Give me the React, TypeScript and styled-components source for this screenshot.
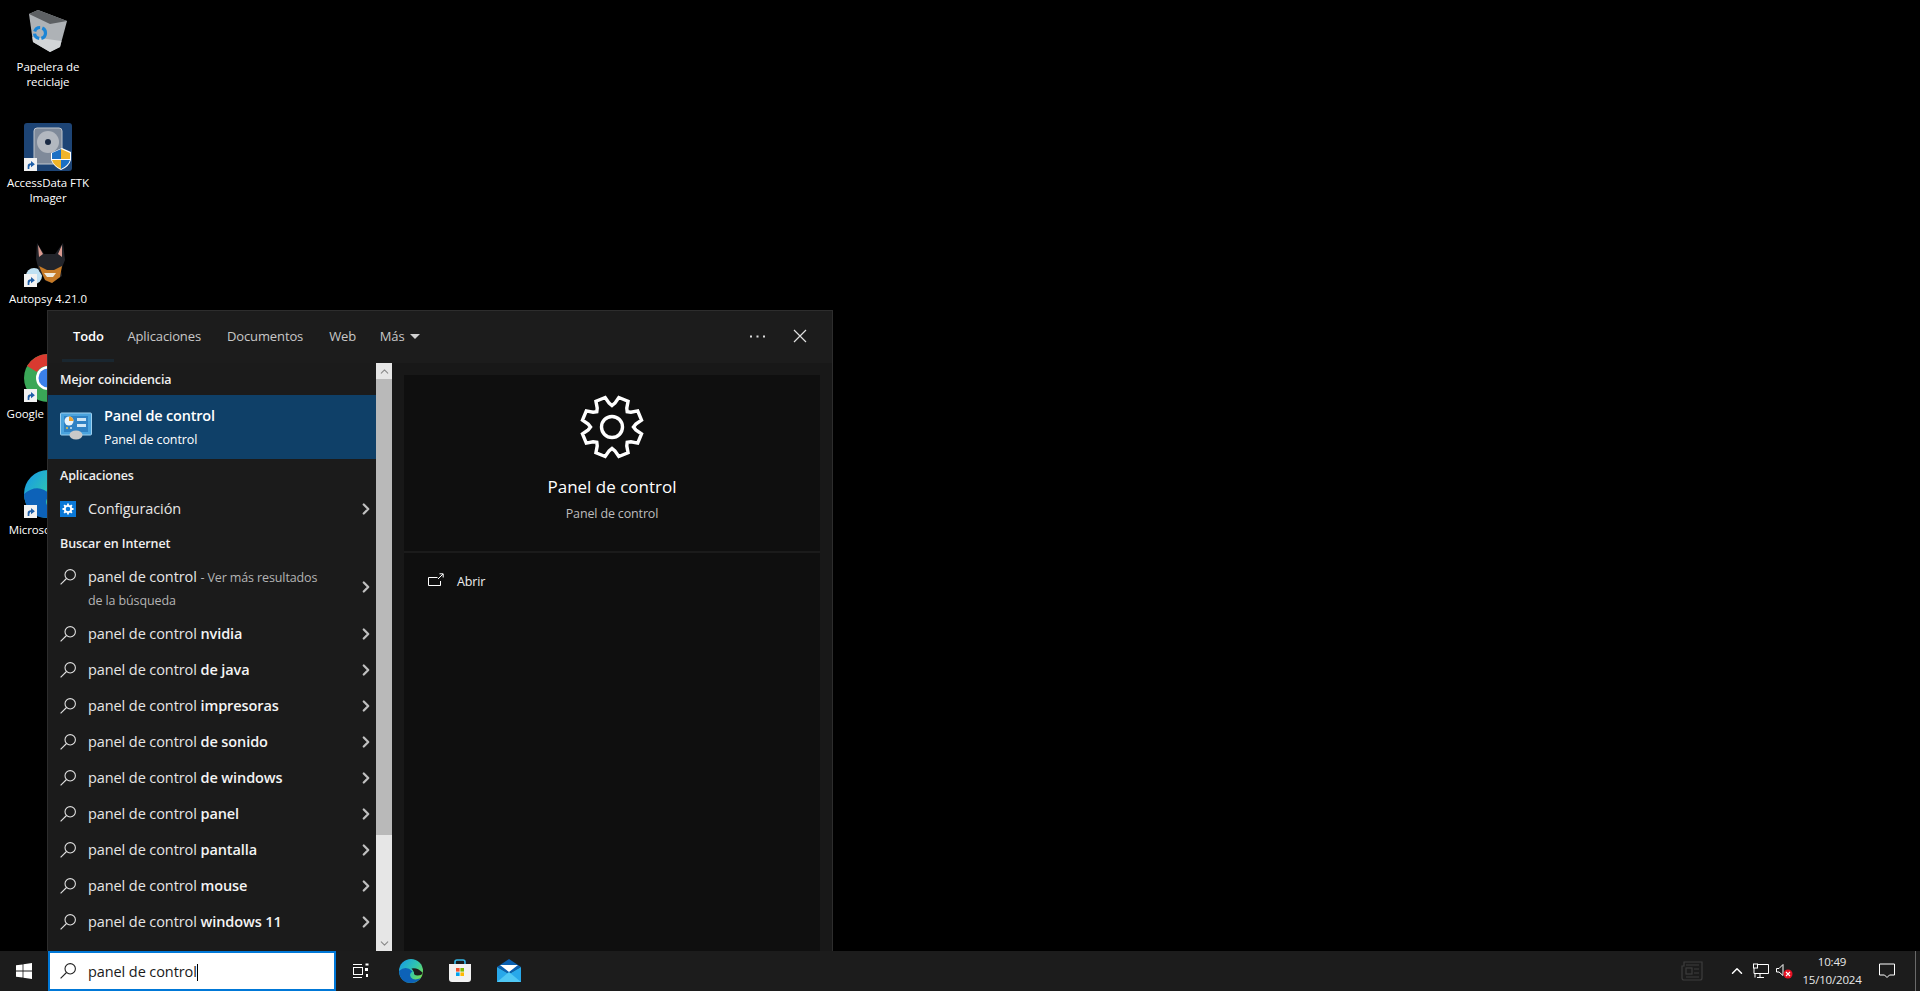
import React from 'react';
import styled, { createGlobalStyle } from 'styled-components';
import { FiChevronRight, FiChevronUp, FiChevronDown } from 'react-icons/fi';

const GlobalStyle = createGlobalStyle`
  html, body {
    margin: 0;
    padding: 0;
    height: 991px;
    background: #000;
    overflow: hidden;
    font-family: "Open Sans", "Noto Sans", sans-serif;
  }
`;

const Screen = styled.div`
  width: 1920px;
  height: 991px;
  display: flex;
  flex-direction: column;
  background: #000;
  position: relative;
  overflow: hidden;
`;

const Desktop = styled.div`
  flex: 1;
  min-height: 0;
  position: relative;
`;

const DesktopIconBox = styled.div<{ $y: number }>`
  position: absolute;
  left: 0;
  top: ${(p) => p.$y}px;
  width: 96px;
  display: flex;
  flex-direction: column;
  align-items: center;
  color: #fff;
  font-size: 11.5px;
  line-height: 15px;
  text-align: center;
  letter-spacing: -0.08px;
`;

const DesktopIconArt = styled.div`
  width: 48px;
  height: 48px;
  margin-bottom: 4px;
  position: relative;
`;

const ShortcutBadge = styled.span`
  position: absolute;
  left: 0;
  bottom: 0;
  width: 13px;
  height: 13px;
  background: #f2f2f2;
  display: flex;
  align-items: center;
  justify-content: center;
`;

const Panel = styled.div`
  position: absolute;
  left: 47px;
  top: 310px;
  width: 786px;
  height: 641px;
  background: #1b1b1b;
  border: 1px solid #2d2d2d;
  border-bottom: 0;
  box-sizing: border-box;
  display: flex;
  flex-direction: column;
  color: #fff;
`;

const TabBar = styled.div`
  height: 52px;
  flex: none;
  box-sizing: border-box;
  display: flex;
  align-items: center;
  padding: 0 25px 2px 12px;
  background: #1c1c1c;
  position: relative;
`;

const Tab = styled.div<{ $active?: boolean }>`
  padding: 0 13px;
  margin-right: ${(p) => (p.$active ? '-2.4px' : '0')};
  font-size: 13px;
  letter-spacing: -0.12px;
  color: ${(p) => (p.$active ? '#fff' : '#c8c8c8')};
  font-weight: ${(p) => (p.$active ? 600 : 400)};
  display: flex;
  align-items: center;
  gap: 6px;
`;

const MoreTab = styled(Tab)`
  margin-left: -2.4px;
`;

const TabCaret = styled.span`
  width: 0;
  height: 0;
  border-left: 5px solid transparent;
  border-right: 5px solid transparent;
  border-top: 5px solid #d0d0d0;
`;

const TabActions = styled.div`
  margin-left: auto;
  display: flex;
  align-items: center;
  gap: 28px;
`;

const ActiveLine = styled.span`
  position: absolute;
  left: 14px;
  bottom: 1px;
  width: 52px;
  height: 3px;
  background: #1a2730;
`;

const PanelBody = styled.div`
  flex: 1;
  min-height: 0;
  display: flex;
`;

const ResultsColumn = styled.div`
  width: 328px;
  flex: none;
  overflow: hidden;
  display: flex;
  flex-direction: column;
`;

const GroupTitle = styled.div`
  height: 32px;
  flex: none;
  display: flex;
  align-items: center;
  padding-left: 12px;
  font-size: 12.5px;
  font-weight: 600;
  letter-spacing: -0.1px;
  color: #f0f0f0;
`;

const BestMatch = styled.div`
  height: 64px;
  flex: none;
  background: #0f4068;
  display: flex;
  align-items: center;
  padding-left: 12px;
  gap: 12px;
`;

const BestText = styled.div`
  display: flex;
  flex-direction: column;
  gap: 7px;
`;

const BestTitle = styled.div`
  font-size: 14.5px;
  line-height: 18px;
  font-weight: 600;
  letter-spacing: -0.2px;
`;

const BestSubtitle = styled.div`
  font-size: 12.5px;
  line-height: 16px;
  letter-spacing: -0.1px;
`;

const Row = styled.div<{ $tall?: boolean }>`
  height: ${(p) => (p.$tall ? 57 : 36)}px;
  padding: ${(p) => (p.$tall ? 3 : 0)}px 1px 0 12px;
  box-sizing: border-box;
  flex: none;
  display: flex;
  align-items: center;
  font-size: 14.5px;
  letter-spacing: -0.09px;
  color: #e6e6e6;
`;

const RowIcon = styled.span<{ $top?: boolean }>`
  width: 16px;
  height: 16px;
  flex: none;
  margin-right: 12px;
  align-self: ${(p) => (p.$top ? 'flex-start' : 'center')};
  margin-top: ${(p) => (p.$top ? '7px' : '0')};
  display: flex;
`;

const RowLabel = styled.div`
  flex: 1;
  line-height: 22px;
  b {
    font-weight: 600;
    color: #f4f4f4;
  }
`;

const Muted = styled.span`
  font-size: 12.5px;
  color: #b4b4b4;
  letter-spacing: -0.12px;
`;

const Chevron = styled(FiChevronRight)`
  width: 18px;
  height: 18px;
  flex: none;
  color: #c0c0c0;
  stroke-width: 3;
`;

const TallChevron = styled(Chevron)`
  margin-bottom: 4px;
`;

const ScrollBar = styled.div`
  width: 16px;
  flex: none;
  background: #e6e6e6;
  display: flex;
  flex-direction: column;
`;

const ScrollButton = styled.div`
  height: 16px;
  flex: none;
  display: flex;
  align-items: center;
  justify-content: center;
  color: #8a8a8a;
  font-size: 13px;
`;

const ScrollThumb = styled.div`
  height: 456px;
  flex: none;
  background: #b9b9b9;
`;

const ScrollSpacer = styled.div`
  flex: 1;
`;

const PreviewColumn = styled.div`
  flex: 1;
  padding: 12px 12px 0;
  background: #181818;
  display: flex;
`;

const PreviewCard = styled.div`
  flex: 1;
  background: #0f0f0f;
  display: flex;
  flex-direction: column;
`;

const PreviewHead = styled.div`
  height: 178px;
  flex: none;
  box-sizing: border-box;
  padding-top: 20px;
  border-bottom: 2px solid #1b1b1b;
  display: flex;
  flex-direction: column;
  align-items: center;
`;

const PreviewTitle = styled.div`
  margin-top: 16px;
  font-size: 17px;
  line-height: 24px;
  letter-spacing: 0;
`;

const PreviewSubtitle = styled.div`
  margin-top: 6px;
  font-size: 12.5px;
  line-height: 18px;
  letter-spacing: -0.15px;
  color: #bdbdbd;
`;

const ActionRow = styled.div`
  display: flex;
  align-items: center;
  gap: 13px;
  padding: 20px 0 0 24px;
  font-size: 12.5px;
  letter-spacing: -0.15px;
  color: #f0f0f0;
  svg {
    margin-bottom: 3px;
  }
`;

const TaskBar = styled.div`
  position: absolute;
  left: 0;
  right: 0;
  bottom: 0;
  height: 40px;
  background: #1c1c1c;
  display: flex;
  align-items: stretch;
  color: #fff;
`;

const StartButton = styled.div`
  width: 48px;
  flex: none;
  display: flex;
  align-items: center;
  justify-content: center;
`;

const SearchBox = styled.div`
  width: 288px;
  flex: none;
  box-sizing: border-box;
  background: #fff;
  border: 2px solid #0078d7;
  display: flex;
  align-items: center;
  padding-left: 10px;
  gap: 12px;
  color: #1a1a1a;
  font-size: 14.5px;
  letter-spacing: -0.09px;
`;

const Caret = styled.span`
  display: inline-block;
  width: 1px;
  height: 17px;
  background: #000;
  vertical-align: -4px;
`;

const TaskButton = styled.div`
  width: 49px;
  flex: none;
  display: flex;
  align-items: center;
  justify-content: center;
`;

const TaskApps = styled.div`
  display: flex;
  margin-left: 1px;
`;

const Tray = styled.div`
  margin-left: auto;
  display: flex;
  align-items: center;
`;

const TrayIcon = styled.div<{ $w: number }>`
  width: ${(p) => p.$w}px;
  display: flex;
  align-items: center;
  justify-content: center;
`;

const Clock = styled.div`
  width: 70px;
  text-align: center;
  font-size: 11.5px;
  line-height: 18px;
  letter-spacing: -0.2px;
  color: #e8e8e8;
`;

const ShowDesktop = styled.div`
  width: 5px;
  align-self: stretch;
  margin-left: 8px;
  border-left: 1px solid #6a6a6a;
  box-sizing: border-box;
`;

// gear outline: 8 flat teeth, a notch straight up
const gearPath = (() => {
  const c = 32;
  const pts: string[] = [];
  for (let i = 0; i < 8; i++) {
    const a = (i * 45 - 90) * (Math.PI / 180);
    const step = Math.PI / 180;
    const at = (r: number, deg: number) =>
      `${(c + r * Math.cos(a + deg * step)).toFixed(2)} ${(c + r * Math.sin(a + deg * step)).toFixed(2)}`;
    pts.push(at(21.5, 0), at(24, 7), at(30.3, 13), at(30.3, 32), at(24, 38));
  }
  return `M${pts.join(' L')} Z`;
})();

const Arrow = () => (
  <svg width="10" height="10" viewBox="0 0 9 9">
    <path d="M1.5 8 V5.5 Q1.5 3 4.5 3 V1 L8 3.8 L4.5 6.5 V4.6 Q3 4.6 3 8 Z" fill="#1f5fa8" />
  </svg>
);

const SearchGlyph = ({ color }: { color: string }) => (
  <svg width="16" height="16" viewBox="0 0 16 16" fill="none" stroke={color} strokeWidth="1.1">
    <circle cx="10.2" cy="5.8" r="5.2" />
    <path d="M6.5 9.5 L0.6 15.4" />
  </svg>
);

const RecycleBin = () => (
  <svg width="48" height="48" viewBox="0 0 48 48">
    <path d="M5 7 L14 3 L43 14 L36 40 L26 45 L9 35 Z" fill="#aeb2b6" />
    <path d="M5 7 L14 3 L43 14 L26 17 Z" fill="#5d6063" />
    <path d="M8.4 30 L37.4 34 L36 40 L26 45 L9 35 Z" fill="#d2d5d7" />
    <circle cx="16" cy="26" r="5.5" fill="none" stroke="#1b85d6" strokeWidth="3.2" strokeDasharray="7 2.2" />
  </svg>
);

const FtkIcon = () => (
  <svg width="48" height="48" viewBox="0 0 48 48">
    <rect width="48" height="48" rx="3" fill="#1d4475" />
    <rect x="10" y="5" width="28" height="36" rx="3" fill="#7f8a9a" stroke="#c0c6ce" />
    <circle cx="24" cy="19" r="11" fill="#b3b8c0" />
    <circle cx="24" cy="19" r="3" fill="#1a2a44" />
    <path d="M27 30 L38 25 L47 29 V37 Q45 44 37 47 Q30 44 27 37 Z" fill="#fff" />
    <path d="M37 26 V36 H28 V30 Z" fill="#1b6fc4" />
    <path d="M37 26 L46 30 V36 H37 Z" fill="#f0b429" />
    <path d="M28 37 H37 V46 Q30 43 28 37 Z" fill="#f0b429" />
    <path d="M37 37 H46 Q44 43 37 46 Z" fill="#1b6fc4" />
  </svg>
);

const AutopsyIcon = () => (
  <svg width="48" height="48" viewBox="0 0 48 48">
    <circle cx="10" cy="37" r="8" fill="#bfe0f2" />
    <path d="M13 4 L20 15 H31 L39 4 L41 21 L37 31 L38 37 L28 44 L22 42 L15 32 L12 20 Z" fill="#22242a" />
    <path d="M14 6 L19 15 L15 18 Z M38 6 L34 15 L38 18 Z" fill="#d99a90" />
    <path d="M15 27 L23 31 L30 31 L38 27 L36 38 L28 44 L21 41 Z" fill="#c67a26" />
    <path d="M20 34 L32 34 L29 38 L23 38 Z" fill="#efe9dc" />
  </svg>
);

const ChromeIcon = () => (
  <svg width="48" height="48" viewBox="0 0 48 48">
    <circle cx="24" cy="24" r="24" fill="#3aa757" />
    <path d="M24 0 A24 24 0 0 1 45 12 H24 A12 12 0 0 0 13 18 L3 12 A24 24 0 0 1 24 0 Z" fill="#d93a30" />
    <path d="M45 12 A24 24 0 0 1 24 48 L35 28 A12 12 0 0 0 34 12 Z" fill="#f5c518" />
    <circle cx="24" cy="24" r="12" fill="#fff" />
    <circle cx="24" cy="24" r="9.5" fill="#3a80ea" />
  </svg>
);

const EdgeIcon = ({ size }: { size: number }) => (
  <svg width={size} height={size} viewBox="0 0 48 48">
    <defs>
      <linearGradient id={`edge${size}`} x1="0.1" y1="0.1" x2="0.95" y2="0.7">
        <stop offset="0" stopColor="#1a9fe0" />
        <stop offset="0.55" stopColor="#2fc5b0" />
        <stop offset="1" stopColor="#6fdc5a" />
      </linearGradient>
    </defs>
    <circle cx="24" cy="24" r="24" fill={`url(#edge${size})`} />
    <path d="M0 24 Q2 48 24 48 Q36 48 44 38 Q30 44 24 37 Q19 30 27 25 Q14 12 0 24 Z" fill="#0d62b8" />
    <path d="M25 19 Q36 16 47 27 Q47 33 37 33 Q29 33 30 27 Q28 22 25 19 Z" fill="#1c1c1c" />
  </svg>
);

const ControlPanelIcon = () => (
  <svg width="32" height="32" viewBox="0 0 32 32">
    <rect x="0.5" y="2" width="31" height="22" rx="1" fill="#4aa3dd" stroke="#9dd0ef" />
    <path d="M4 5 H28 V21 H4 Z" fill="#2f82c4" />
    <circle cx="9" cy="10" r="4.5" fill="#e9f3fa" />
    <path d="M9 10 V5.5 A4.5 4.5 0 0 1 13.5 10 Z" fill="#f0a32e" />
    <rect x="17" y="7" width="9" height="3" fill="#cfe6f5" />
    <rect x="17" y="13" width="9" height="3" fill="#cfe6f5" />
    <circle cx="7" cy="17" r="1" fill="#f0c040" />
    <circle cx="11" cy="17" r="1" fill="#cfe6f5" />
    <ellipse cx="16" cy="24" rx="6.5" ry="4.5" fill="#c9c9c9" />
  </svg>
);

const SettingsTile = () => (
  <svg width="16" height="16" viewBox="0 0 16 16">
    <rect width="16" height="16" fill="#0a78d7" />
    <circle cx="8" cy="8" r="3.2" fill="none" stroke="#fff" strokeWidth="1.8" />
    <path d="M8 2.5 V4.5 M8 11.5 V13.5 M2.5 8 H4.5 M11.5 8 H13.5 M4.1 4.1 L5.5 5.5 M10.5 10.5 L11.9 11.9 M4.1 11.9 L5.5 10.5 M10.5 5.5 L11.9 4.1" stroke="#fff" strokeWidth="1.8" />
  </svg>
);

const BigGear = () => (
  <svg width="64" height="64" viewBox="0 0 64 64" fill="none" stroke="#fff" strokeWidth="3.4" strokeLinejoin="miter">
    <circle cx="32" cy="32" r="10.5" />
    <path d={gearPath} />
  </svg>
);

const OpenGlyph = () => (
  <svg width="16" height="14" viewBox="0 0 16 14" fill="none" stroke="#fff" strokeWidth="1">
    <path d="M9.5 4.5 H0.5 V12.5 H12.5 V8" />
    <path d="M10 6 L15 1 M11.5 0.8 H15.2 V4.5" />
  </svg>
);

const Dots = () => (
  <svg width="15" height="3" viewBox="0 0 15 3" fill="#ddd">
    <rect x="0" y="0.5" width="2" height="2" />
    <rect x="6.5" y="0.5" width="2" height="2" />
    <rect x="13" y="0.5" width="2" height="2" />
  </svg>
);

const WindowsLogo = () => (
  <svg width="16" height="16" viewBox="0 0 16 16" fill="#fff">
    <path d="M0 2.3 L6.6 1.4 V7.6 H0 Z M7.4 1.3 L16 0 V7.6 H7.4 Z M0 8.4 H6.6 V14.6 L0 13.7 Z M7.4 8.4 H16 V16 L7.4 14.7 Z" />
  </svg>
);

const TaskView = () => (
  <svg width="16" height="16" viewBox="0 0 16 16" fill="none" stroke="#fff" strokeWidth="1">
    <path d="M0 1.5 H9 M0 14.5 H9" />
    <rect x="0.5" y="4.5" width="9" height="7" />
    <rect x="13" y="1" width="2" height="1" fill="#fff" />
    <rect x="12" y="5" width="3" height="3" fill="#fff" stroke="none" />
    <rect x="13" y="11" width="2" height="3" fill="#fff" stroke="none" />
  </svg>
);

const StoreIcon = () => (
  <svg width="24" height="24" viewBox="0 0 24 24">
    <path d="M7 6 V3 Q7 1 9 1 H15 Q17 1 17 3 V6" fill="none" stroke="#35b8e8" strokeWidth="1.6" />
    <path d="M1 5 H23 V20 Q23 23 20 23 H4 Q1 23 1 20 Z" fill="#f2f2f2" />
    <rect x="8" y="9" width="3.6" height="3.6" fill="#f0502e" />
    <rect x="12.4" y="9" width="3.6" height="3.6" fill="#7fba00" />
    <rect x="8" y="13.4" width="3.6" height="3.6" fill="#00a4ef" />
    <rect x="12.4" y="13.4" width="3.6" height="3.6" fill="#ffb900" />
  </svg>
);

const MailIcon = () => (
  <svg width="24" height="24" viewBox="0 0 24 24">
    <path d="M0 8 L12 0 L24 8 L12 15 Z" fill="#0a5fb0" />
    <path d="M0 8 L12 15 L24 8 V23 H0 Z" fill="#28a8ea" />
    <path d="M0 23 L12 13 L24 23 Z" fill="#50c8f4" />
    <path d="M3 6 H21 L12 13 Z" fill="#fff" />
  </svg>
);

const NewsIcon = () => (
  <svg width="24" height="20" viewBox="0 0 24 20" fill="none" stroke="#3c3c3c" strokeWidth="1.2">
    <path d="M3 1 H21 V17 Q21 19 19 19 H3 Q1 19 1 17 V5 H3 Z" />
    <rect x="5" y="7" width="6" height="6" />
    <path d="M5 4 H18 M13 8 H18 M13 12 H18 M5 16 H18" />
  </svg>
);

const NetworkIcon = () => (
  <svg width="16" height="16" viewBox="0 0 16 16" fill="none" stroke="#fff" strokeWidth="1">
    <path d="M4 1.5 H15.5 V10.5 H1 V5" />
    <rect x="0.5" y="1" width="4" height="4" fill="#1c1c1c" />
    <path d="M2 10.5 V14.5 M7 10.5 V14.5 M4 14.5 H11" />
  </svg>
);

const VolumeIcon = () => (
  <svg width="18" height="16" viewBox="0 0 18 16">
    <path d="M0.5 5.5 H3 L7 1.5 V12.5 L3 9 H0.5 Z" fill="none" stroke="#fff" strokeWidth="1" />
    <circle cx="12" cy="11" r="4.5" fill="#e81123" />
    <path d="M10 9 L14 13 M14 9 L10 13" stroke="#fff" strokeWidth="1.1" />
  </svg>
);

const CommentIcon = () => (
  <svg width="16" height="16" viewBox="0 0 16 16" fill="none" stroke="#fff" strokeWidth="1">
    <path d="M0.5 1 H15.5 V12 H10.5 L8 14.5 L5.5 12 H0.5 Z" />
  </svg>
);

const Close = () => (
  <svg width="14" height="14" viewBox="0 0 14 14" stroke="#e0e0e0" strokeWidth="1.2">
    <path d="M1 1 L13 13 M13 1 L1 13" />
  </svg>
);

const suggestions = [
  'nvidia',
  'de java',
  'impresoras',
  'de sonido',
  'de windows',
  'panel',
  'pantalla',
  'mouse',
  'windows 11',
];

const tabs = ['Aplicaciones', 'Documentos', 'Web'];

export default function App() {
  return (
    <Screen>
      <GlobalStyle />
      <Desktop>
        <DesktopIconBox $y={7}>
          <DesktopIconArt>
            <RecycleBin />
          </DesktopIconArt>
          Papelera de
          <br />
          reciclaje
        </DesktopIconBox>
        <DesktopIconBox $y={123}>
          <DesktopIconArt>
            <FtkIcon />
            <ShortcutBadge>
              <Arrow />
            </ShortcutBadge>
          </DesktopIconArt>
          AccessData FTK
          <br />
          Imager
        </DesktopIconBox>
        <DesktopIconBox $y={239}>
          <DesktopIconArt>
            <AutopsyIcon />
            <ShortcutBadge>
              <Arrow />
            </ShortcutBadge>
          </DesktopIconArt>
          Autopsy 4.21.0
        </DesktopIconBox>
        <DesktopIconBox $y={354}>
          <DesktopIconArt>
            <ChromeIcon />
            <ShortcutBadge>
              <Arrow />
            </ShortcutBadge>
          </DesktopIconArt>
          Google Chrome
        </DesktopIconBox>
        <DesktopIconBox $y={470}>
          <DesktopIconArt>
            <EdgeIcon size={48} />
            <ShortcutBadge>
              <Arrow />
            </ShortcutBadge>
          </DesktopIconArt>
          Microsoft Edge
        </DesktopIconBox>
      </Desktop>

      <Panel>
        <TabBar>
          <Tab $active>Todo</Tab>
          {tabs.map((t) => (
            <Tab key={t}>{t}</Tab>
          ))}
          <MoreTab>
            Más <TabCaret />
          </MoreTab>
          <TabActions>
            <Dots />
            <Close />
          </TabActions>
          <ActiveLine />
        </TabBar>
        <PanelBody>
          <ResultsColumn>
            <GroupTitle>Mejor coincidencia</GroupTitle>
            <BestMatch>
              <ControlPanelIcon />
              <BestText>
                <BestTitle>Panel de control</BestTitle>
                <BestSubtitle>Panel de control</BestSubtitle>
              </BestText>
            </BestMatch>
            <GroupTitle>Aplicaciones</GroupTitle>
            <Row>
              <RowIcon>
                <SettingsTile />
              </RowIcon>
              <RowLabel>Configuración</RowLabel>
              <Chevron />
            </Row>
            <GroupTitle>Buscar en Internet</GroupTitle>
            <Row $tall>
              <RowIcon $top>
                <SearchGlyph color="#e0e0e0" />
              </RowIcon>
              <RowLabel>
                panel de control <Muted>- Ver más resultados</Muted>
                <br />
                <Muted>de la búsqueda</Muted>
              </RowLabel>
              <TallChevron />
            </Row>
            {suggestions.map((s) => (
              <Row key={s}>
                <RowIcon>
                  <SearchGlyph color="#e0e0e0" />
                </RowIcon>
                <RowLabel>
                  panel de control <b>{s}</b>
                </RowLabel>
                <Chevron />
              </Row>
            ))}
          </ResultsColumn>
          <ScrollBar>
            <ScrollButton>
              <FiChevronUp />
            </ScrollButton>
            <ScrollThumb />
            <ScrollSpacer />
            <ScrollButton>
              <FiChevronDown />
            </ScrollButton>
          </ScrollBar>
          <PreviewColumn>
            <PreviewCard>
              <PreviewHead>
                <BigGear />
                <PreviewTitle>Panel de control</PreviewTitle>
                <PreviewSubtitle>Panel de control</PreviewSubtitle>
              </PreviewHead>
              <ActionRow>
                <OpenGlyph />
                Abrir
              </ActionRow>
            </PreviewCard>
          </PreviewColumn>
        </PanelBody>
      </Panel>

      <TaskBar>
        <StartButton>
          <WindowsLogo />
        </StartButton>
        <SearchBox>
          <SearchGlyph color="#222" />
          <span>
            panel de control
            <Caret />
          </span>
        </SearchBox>
        <TaskButton>
          <TaskView />
        </TaskButton>
        <TaskApps>
          <TaskButton>
            <EdgeIcon size={24} />
          </TaskButton>
          <TaskButton>
            <StoreIcon />
          </TaskButton>
          <TaskButton>
            <MailIcon />
          </TaskButton>
        </TaskApps>
        <Tray>
          <TrayIcon $w={64}>
            <NewsIcon />
          </TrayIcon>
          <TrayIcon $w={24}>
            <FiChevronUp size={18} />
          </TrayIcon>
          <TrayIcon $w={24}>
            <NetworkIcon />
          </TrayIcon>
          <TrayIcon $w={24}>
            <VolumeIcon />
          </TrayIcon>
          <Clock>
            10:49
            <br />
            15/10/2024
          </Clock>
          <TrayIcon $w={40}>
            <CommentIcon />
          </TrayIcon>
          <ShowDesktop />
        </Tray>
      </TaskBar>
    </Screen>
  );
}
